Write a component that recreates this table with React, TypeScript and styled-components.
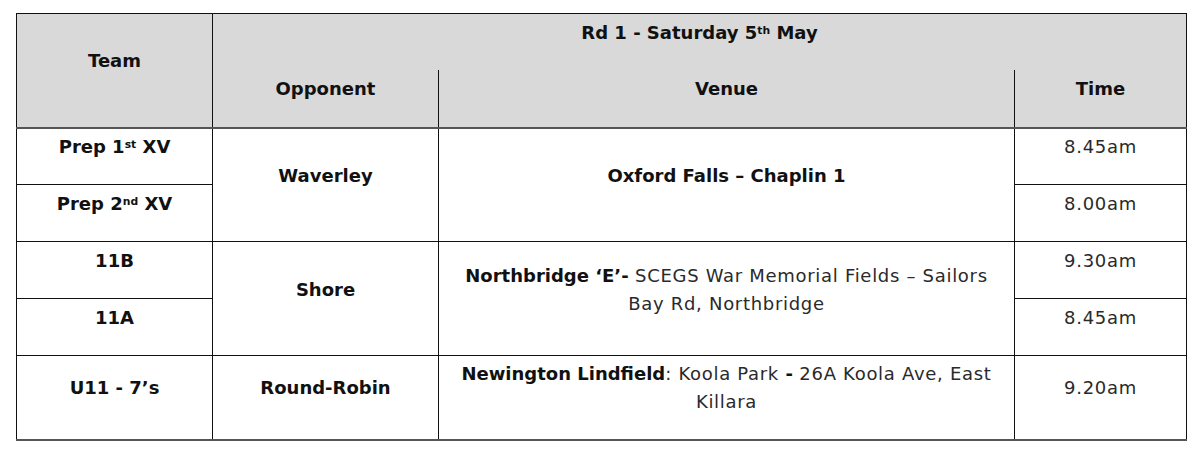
import React from "react";
import styled, { createGlobalStyle } from "styled-components";

const Global = createGlobalStyle`
  html, body { margin: 0; padding: 0; background: #ffffff; }
  body { font-family: "DejaVu Sans", "Liberation Sans", sans-serif; }
`;

const Page = styled.div`
  padding: 13px 0 0 16px;
`;

const Table = styled.table`
  width: 1171px;
  border-collapse: collapse;
  table-layout: fixed;
  border-top: 1px solid #111;
  border-left: 1px solid #111;
  border-right: 1px solid #111;
  border-bottom: 2px solid #555;
`;

const Row = styled.tr<{ $h: number }>`
  height: ${(p) => p.$h}px;
`;

const HeadRow = styled.tr<{ $h: number; $last?: boolean }>`
  height: ${(p) => p.$h}px;
  background: #d9d9d9;
  ${(p) => (p.$last ? "border-bottom: 2px solid #555;" : "")}
`;

const Cell = styled.td<{ $noTop?: boolean; $light?: boolean }>`
  padding: 0 6px 18px;
  text-align: center;
  vertical-align: middle;
  border: 1px solid #111;
  ${(p) => (p.$noTop ? "border-top: none;" : "")}
  ${(p) => (p.$light ? "border-left-color: #666;" : "")}
  font-size: 18px;
  line-height: 28px;
  letter-spacing: 0.7px;
  color: #2a2a2a;
`;

const HeadCell = styled(Cell).attrs({ as: "th" })<{ $noBottom?: boolean }>`
  font-weight: bold;
  color: #111;
  letter-spacing: 0;
  ${(p) => (p.$noBottom ? "border-bottom: none;" : "")}
`;

const Strong = styled.span`
  font-weight: bold;
  color: #111;
  letter-spacing: 0;
`;

const Sup = styled.sup`
  font-size: 0.6em;
  line-height: 0;
  vertical-align: 0.5em;
`;

export default function App() {
  return (
    <>
      <Global />
      <Page>
        <Table>
          <colgroup>
            <col style={{ width: 196 }} />
            <col style={{ width: 226 }} />
            <col style={{ width: 576 }} />
            <col style={{ width: 172 }} />
          </colgroup>
          <thead>
            <HeadRow $h={56}>
              <HeadCell rowSpan={2}>Team</HeadCell>
              <HeadCell colSpan={3} $noBottom>
                Rd 1 - Saturday 5<Sup>th</Sup> May
              </HeadCell>
            </HeadRow>
            <HeadRow $h={58} $last>
              <HeadCell $noTop>Opponent</HeadCell>
              <HeadCell $noTop>Venue</HeadCell>
              <HeadCell $noTop $light>Time</HeadCell>
            </HeadRow>
          </thead>
          <tbody>
            <Row $h={57}>
              <Cell>
                <Strong>
                  Prep 1<Sup>st</Sup> XV
                </Strong>
              </Cell>
              <Cell rowSpan={2}>
                <Strong>Waverley</Strong>
              </Cell>
              <Cell rowSpan={2}>
                <Strong>Oxford Falls – Chaplin 1</Strong>
              </Cell>
              <Cell>8.45am</Cell>
            </Row>
            <Row $h={57}>
              <Cell>
                <Strong>
                  Prep 2<Sup>nd</Sup> XV
                </Strong>
              </Cell>
              <Cell>8.00am</Cell>
            </Row>
            <Row $h={57}>
              <Cell>
                <Strong>11B</Strong>
              </Cell>
              <Cell rowSpan={2}>
                <Strong>Shore</Strong>
              </Cell>
              <Cell rowSpan={2}>
                <Strong>Northbridge ‘E’-</Strong> SCEGS War Memorial Fields – Sailors
                <br />
                Bay Rd, Northbridge
              </Cell>
              <Cell>9.30am</Cell>
            </Row>
            <Row $h={57}>
              <Cell>
                <Strong>11A</Strong>
              </Cell>
              <Cell>8.45am</Cell>
            </Row>
            <Row $h={84}>
              <Cell>
                <Strong>U11 - 7’s</Strong>
              </Cell>
              <Cell>
                <Strong>Round-Robin</Strong>
              </Cell>
              <Cell>
                <Strong>Newington Lindfield</Strong>: Koola Park <Strong>-</Strong> 26A Koola Ave, East
                <br />
                Killara
              </Cell>
              <Cell>9.20am</Cell>
            </Row>
          </tbody>
        </Table>
      </Page>
    </>
  );
}
